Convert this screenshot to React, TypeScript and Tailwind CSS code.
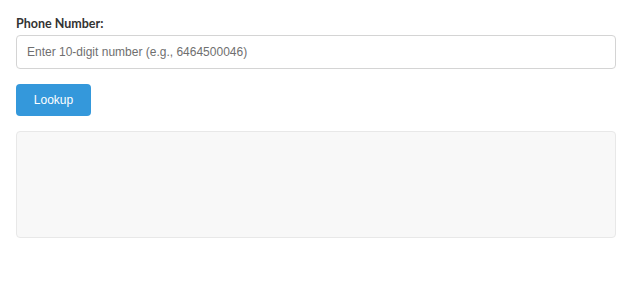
export default function App() {
  return (
    <div className="min-h-screen bg-white py-4 pl-4 font-['Liberation_Sans',Arial,sans-serif]">
      <div className="w-[600px]">
        <label className="block mb-[4px] text-[12.5px] font-bold text-[#333] font-['Lato',sans-serif] leading-[15px]">
          Phone Number:
        </label>
        <input
          type="text"
          placeholder="Enter 10-digit number (e.g., 6464500046)"
          className="block w-full h-[34px] px-2.5 border border-[#d4d4d4] rounded-[4px] text-[12px] text-[#333] placeholder:text-[#6f6f6f] outline-none"
        />
        <button className="mt-[15px] h-[32px] w-[75px] rounded-[4px] bg-[#3498db] text-white text-[12px]">
          Lookup
        </button>
        <div className="mt-[15px] h-[107px] rounded-[4px] border border-[#e8e8e8] bg-[#f8f8f8]"></div>
      </div>
    </div>
  );
}
